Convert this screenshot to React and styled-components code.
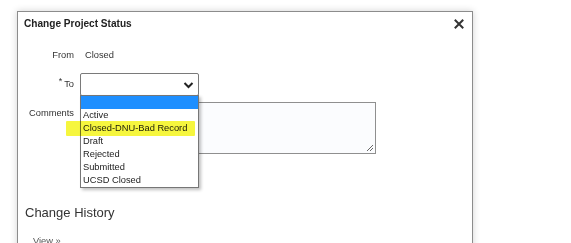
import React from "react";
import styled, { createGlobalStyle } from "styled-components";

const Global = createGlobalStyle`
  html, body { margin: 0; padding: 0; background: #ffffff; }
  body { font-family: "Liberation Sans", Arial, sans-serif; color: #333; overflow: hidden; }
`;

const Page = styled.div`
  padding: 11px 0 0 17px;
  height: 243px;
  box-sizing: border-box;
`;

const Dialog = styled.div`
  width: 456px;
  height: 260px;
  box-sizing: border-box;
  border: 1px solid #8c8c8c;
  background: #fff;
  box-shadow: 0 0 7px rgba(0, 0, 0, 0.18);
  display: flex;
  flex-direction: column;
`;

const Header = styled.div`
  display: flex;
  justify-content: space-between;
  align-items: center;
  padding: 5px 8px 5px 6px;
`;

const Title = styled.div`
  font-size: 10.1px;
  font-weight: bold;
  line-height: 14px;
  color: #222;
`;

const Close = styled.button`
  border: 0;
  background: none;
  padding: 0;
  width: 10px;
  height: 10px;
  display: flex;
  cursor: pointer;
`;

const Form = styled.div`
  margin-top: 12px;
  display: grid;
  grid-template-columns: 56px 1fr;
  column-gap: 6px;
  row-gap: 11px;
  align-items: center;
`;

const Label = styled.div`
  font-size: 9.3px;
  line-height: 14px;
  text-align: right;
  color: #333;
  align-self: ${(p) => (p.$top ? "start" : "center")};
`;

const Req = styled.sup`
  font-size: 9px;
  line-height: 0;
  margin-right: 2px;
  position: relative;
  top: 1px;
`;

const Value = styled.div`
  font-size: 9.3px;
  line-height: 14px;
  padding-left: 5px;
  color: #333;
`;

const SelectWrap = styled.div`
  position: relative;
  width: 119px;
  height: 22px;
`;

const SelectBox = styled.div`
  box-sizing: border-box;
  width: 119px;
  height: 23px;
  border: 1px solid #7a7a7a;
  border-radius: 2px;
  background: #fff;
  display: flex;
  align-items: center;
  justify-content: flex-end;
  padding-right: 4px;
`;

const List = styled.ul`
  position: absolute;
  left: 0;
  top: 22px;
  margin: 0;
  padding: 0;
  list-style: none;
  width: 119px;
  box-sizing: border-box;
  border: 1px solid #767676;
  background: #fff;
  box-shadow: 2px 2px 3px rgba(0, 0, 0, 0.25);
  z-index: 2;
`;

const Item = styled.li`
  height: 13px;
  line-height: 13px;
  font-size: 9.3px;
  padding-left: 2px;
  color: #222;
  background: ${(p) => (p.$selected ? "#1e8fff" : "transparent")};
  white-space: nowrap;
`;

const Marker = styled.div`
  position: absolute;
  left: -14px;
  top: 48px;
  width: 129px;
  height: 15px;
  background: #f6f63e;
  mix-blend-mode: multiply;
  z-index: 3;
  border-radius: 1px;
`;

const TextArea = styled.div`
  width: 296px;
  height: 52px;
  box-sizing: border-box;
  border: 1px solid #8f8f8f;
  background: #fbfcfe;
  position: relative;
  margin-top: -4px;
`;

const Grip = styled.svg`
  position: absolute;
  right: 1px;
  bottom: 1px;
`;

const Section = styled.h2`
  margin: 51px 0 0 7px;
  font-size: 13px;
  font-weight: normal;
  line-height: 16px;
  color: #333;
`;

const ViewLink = styled.div`
  margin: 14px 0 0 15px;
  font-size: 9.3px;
  line-height: 12px;
  color: #555;
`;

const options = ["", "Active", "Closed-DNU-Bad Record", "Draft", "Rejected", "Submitted", "UCSD Closed"];

export default function App() {
  return (
    <Page>
      <Global />
      <Dialog>
        <Header>
          <Title>Change Project Status</Title>
          <Close aria-label="Close">
            <svg width="10" height="10" viewBox="0 0 10 10">
              <path d="M1.5 1.5 L8.5 8.5 M8.5 1.5 L1.5 8.5" stroke="#333" strokeWidth="2" strokeLinecap="square" />
            </svg>
          </Close>
        </Header>
        <Form>
          <Label>From</Label>
          <Value>Closed</Value>
          <Label>
            <Req>*</Req>To
          </Label>
          <SelectWrap>
            <SelectBox>
              <svg width="11" height="8" viewBox="0 0 11 8">
                <path d="M1.5 2 L5.5 6 L9.5 2" fill="none" stroke="#222" strokeWidth="2" />
              </svg>
            </SelectBox>
            <List>
              {options.map((o, i) => (
                <Item key={i} $selected={i === 0}>
                  {o}
                </Item>
              ))}
            </List>
            <Marker />
          </SelectWrap>
          <Label $top>Comments</Label>
          <TextArea>
            <Grip width="8" height="8" viewBox="0 0 8 8">
              <path d="M7 1 L1 7 M7 4 L4 7" stroke="#666" strokeWidth="1" />
            </Grip>
          </TextArea>
        </Form>
        <Section>Change History</Section>
        <ViewLink>View »</ViewLink>
      </Dialog>
    </Page>
  );
}
